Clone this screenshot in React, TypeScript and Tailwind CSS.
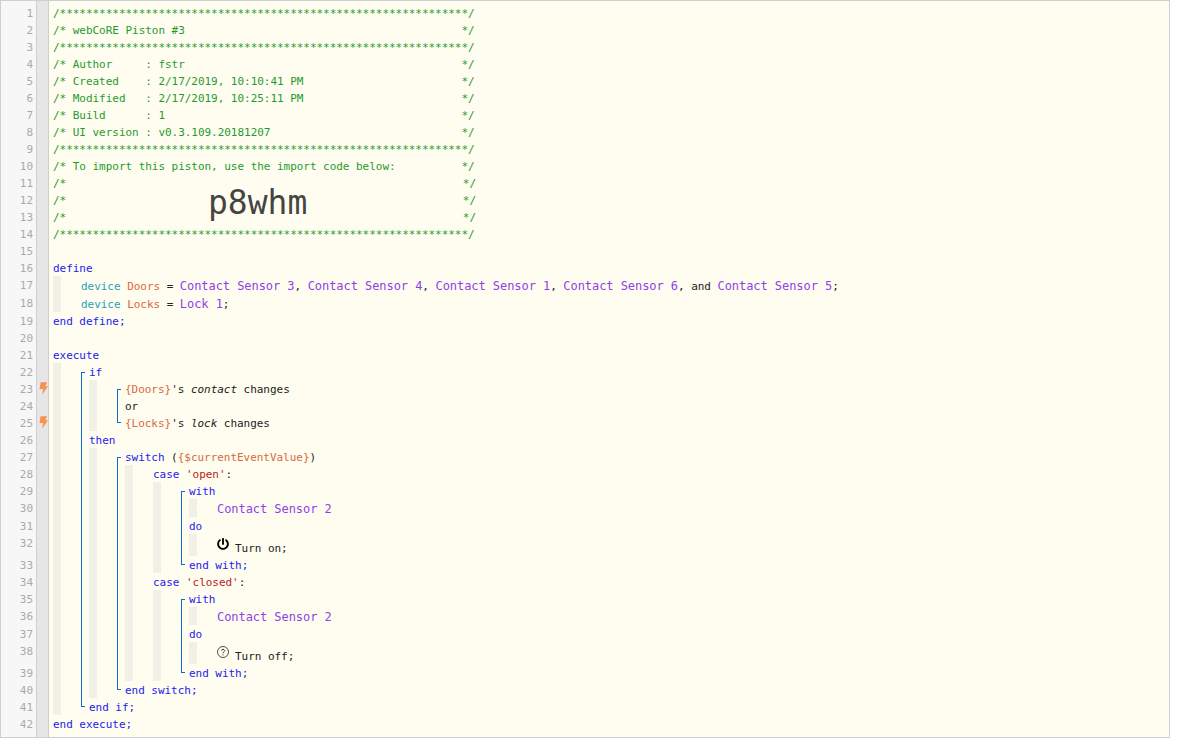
import React from "react";
import { FaPowerOff } from "react-icons/fa";

const tall = [17, 18, 30, 36];
const taller = [32, 38];
const bolt = [23, 25];

function Row({ children }: { children?: React.ReactNode }) {
  return <div className="h-[17px] leading-[19px] whitespace-pre">{children}</div>;
}
function TallRow({ children }: { children?: React.ReactNode }) {
  return <div className="h-[18px] leading-[21px] whitespace-pre">{children}</div>;
}
function Indent({ children }: { children: React.ReactNode }) {
  return (
    <div className="flex">
      <div className="w-2 shrink-0 bg-[#f1f0e7]" />
      <div className="ml-5 min-w-0 grow">{children}</div>
    </div>
  );
}
function Bracket({ children }: { children: React.ReactNode }) {
  return (
    <div className="relative pl-2">
      <div className="absolute left-0 top-[9px] bottom-2 w-1 border-y border-l border-[#0a6ecb]" />
      {children}
    </div>
  );
}
const K = ({ children }: { children: React.ReactNode }) => <span className="text-[#2222ee]">{children}</span>;
const V = ({ children }: { children: React.ReactNode }) => <span className="text-[#d9693c]">{children}</span>;
const D = ({ children }: { children: React.ReactNode }) => <span className="text-[12px] tracking-[-0.06px] text-[#8f3fe8]">{children}</span>;
const T = ({ children }: { children: React.ReactNode }) => <span className="text-[#2a9fb8]">{children}</span>;
const S = ({ children }: { children: React.ReactNode }) => <span className="text-[#b81c1c]">{children}</span>;

const stars = "/" + "*".repeat(62) + "/";
const pad = (s: string) => s.padEnd(62, " ") + "*/";
const headerTop = [
  stars,
  pad("/* webCoRE Piston #3"),
  stars,
  pad("/* Author     : fstr"),
  pad("/* Created    : 2/17/2019, 10:10:41 PM"),
  pad("/* Modified   : 2/17/2019, 10:25:11 PM"),
  pad("/* Build      : 1"),
  pad("/* UI version : v0.3.109.20181207"),
  stars,
  pad("/* To import this piston, use the import code below:"),
];

function Bolt() {
  return (
    <svg viewBox="0 0 10 14" className="absolute right-0 top-[2px] h-[13px] w-[9px]">
      <path d="M1.8 0 H9 L7 4.6 H10 L3.4 14 L4.6 7.6 H0.6 Z" fill="#f8914e" />
    </svg>
  );
}

function Action({ icon, label }: { icon: React.ReactNode; label: string }) {
  return (
    <div className="h-[22px] pl-7 whitespace-pre">
      <div className="flex h-full items-start">
        <div className="flex h-[19px] w-[12px] items-center justify-center">{icon}</div>
        <span className="ml-[6px] mt-[5px] leading-[19px]">{label}</span>
      </div>
    </div>
  );
}

function Question() {
  return (
    <svg viewBox="0 0 12 12" className="h-3 w-3">
      <circle cx="6" cy="6" r="5.5" fill="none" stroke="#222" strokeWidth="0.8" />
      <path d="M4.4 4.6 C4.4 2.9 7.6 2.9 7.6 4.6 C7.6 5.8 6 5.6 6 7.2" fill="none" stroke="#222" strokeWidth="0.9" />
      <circle cx="6" cy="8.8" r="0.6" fill="#222" />
    </svg>
  );
}

function WithBlock({ action }: { action: React.ReactNode }) {
  return (
    <Bracket>
      <Row><K>with</K></Row>
      <Indent>
        <TallRow><D>Contact Sensor 2</D></TallRow>
      </Indent>
      <Row><K>do</K></Row>
      <div className="flex">
        <div className="w-2 shrink-0 bg-[#f1f0e7]" />
        <div className="-ml-2 grow">{action}</div>
      </div>
      <Row><K>end with;</K></Row>
    </Bracket>
  );
}

function SplitRow({ children }: { children?: React.ReactNode }) {
  return (
    <div className="relative flex h-[17px] w-[423px] justify-between leading-[19px] whitespace-pre">
      <span>/*</span>
      {children}
      <span>*/</span>
    </div>
  );
}

export default function App() {
  const rows = Array.from({ length: 42 }, (_, i) => i + 1);
  return (
    <div className="flex h-[738px] w-[1170px] overflow-hidden border border-[#cfcfcf] bg-[#fffdf0] font-['DejaVu_Sans_Mono',monospace] text-[11px] tracking-[-0.035px] text-[#222]">
      <div className="flex w-[48px] shrink-0 border-r border-[#cfcfcf] bg-[#e6e6e6]">
        <div className="w-[36px] shrink-0 border-r border-[#cfcfcf] bg-[#f7f7f7] pt-[3px] text-right text-[#aaaaaa]">
          {rows.map((n) => (
            <div
              key={n}
              className={`pr-[3px] leading-[19px] ${taller.includes(n) ? "h-[22px]" : tall.includes(n) ? "h-[18px]" : "h-[17px]"}`}
            >
              {n}
            </div>
          ))}
        </div>
        <div className="grow pt-[3px]">
          {rows.map((n) => (
            <div
              key={n}
              className={`relative -ml-[3px] ${taller.includes(n) ? "h-[22px]" : tall.includes(n) ? "h-[18px]" : "h-[17px]"}`}
            >
              {bolt.includes(n) && <Bolt />}
            </div>
          ))}
        </div>
      </div>
      <div className="min-w-0 grow pl-1 pt-[3px]">
        <div className="text-[#1f9a2f]">
          {headerTop.map((l, i) => (
            <Row key={i}>{l}</Row>
          ))}
          <SplitRow />
          <SplitRow>
            <span className="absolute left-[155px] top-[-6px] text-[33px] leading-[36px] tracking-normal text-[#444444]">p8whm</span>
          </SplitRow>
          <SplitRow />
          <Row>{stars}</Row>
        </div>
        <Row />
        <Row><K>define</K></Row>
        <Indent>
          <TallRow>
            <T>device</T> <V>Doors</V> = <D>Contact Sensor 3</D>, <D>Contact Sensor 4</D>, <D>Contact Sensor 1</D>, <D>Contact Sensor 6</D>, and <D>Contact Sensor 5</D>;
          </TallRow>
          <TallRow>
            <T>device</T> <V>Locks</V> = <D>Lock 1</D>;
          </TallRow>
        </Indent>
        <Row><K>end define;</K></Row>
        <Row />
        <Row><K>execute</K></Row>
        <Indent>
          <Bracket>
            <Row><K>if</K></Row>
            <Indent>
              <Bracket>
                <Row><V>{"{Doors}"}</V>'s <em>contact</em> changes</Row>
                <Row>or</Row>
                <Row><V>{"{Locks}"}</V>'s <em>lock</em> changes</Row>
              </Bracket>
            </Indent>
            <Row><K>then</K></Row>
            <Indent>
              <Bracket>
                <Row><K>switch</K> (<V>{"{$currentEventValue}"}</V>)</Row>
                <Indent>
                  <Row><K>case</K> <S>'open'</S>:</Row>
                  <Indent>
                    <WithBlock action={<Action icon={<FaPowerOff className="size-3 text-black" />} label="Turn on;" />} />
                  </Indent>
                  <Row><K>case</K> <S>'closed'</S>:</Row>
                  <Indent>
                    <WithBlock action={<Action icon={<Question />} label="Turn off;" />} />
                  </Indent>
                </Indent>
                <Row><K>end switch;</K></Row>
              </Bracket>
            </Indent>
            <Row><K>end if;</K></Row>
          </Bracket>
        </Indent>
        <Row><K>end execute;</K></Row>
      </div>
    </div>
  );
}
